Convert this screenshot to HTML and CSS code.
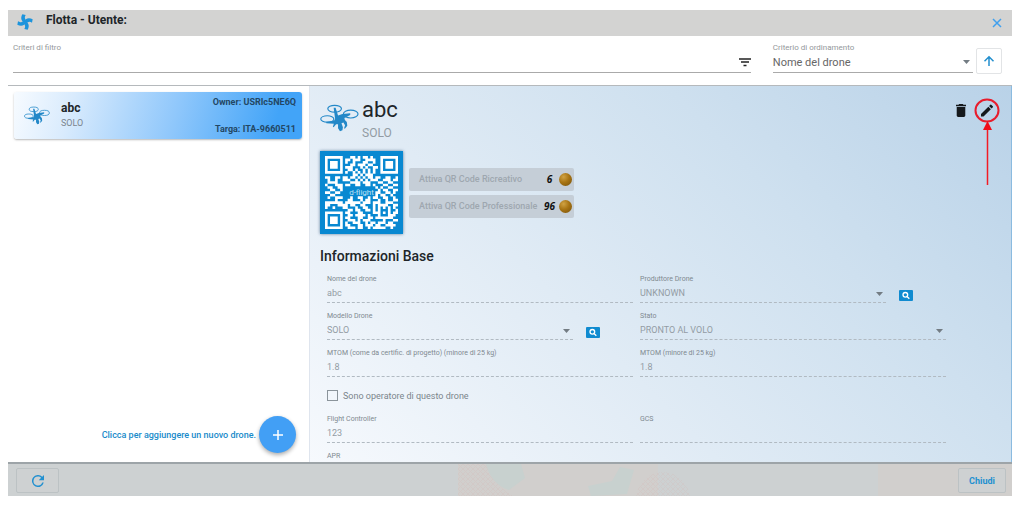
FILE: index.html
```
<!DOCTYPE html>
<html lang="it">
<head>
<meta charset="utf-8">
<title>Flotta - Utente</title>
<link rel="stylesheet" href="styles.css">
</head>
<body>
<svg class="defs" aria-hidden="true">
  <symbol id="drone" viewBox="0 0 40 28">
    <g fill="none" stroke="currentColor" stroke-width="1.2">
      <ellipse cx="15" cy="4.500" rx="7" ry="3.500"/>
      <ellipse cx="31.500" cy="10" rx="7.500" ry="4"/>
      <ellipse cx="7.500" cy="15" rx="6.700" ry="3.300"/>
    </g>
    <path fill="currentColor" d="M14 3.500h2l2.500 8 4.500-1.500 8-1v2l-6 3 .5 2 2 2 .5 4-2.500 3-.8-.5 1-3-1.700-3-2 1 1.500 4-.5 3-2.500 1-2-3v-4l-2 0-2.500 3-.8-.5 1-3-7.700-.5v-1.500l8-1.500 1-1.500z"/>
  </symbol>
  <symbol id="search" viewBox="0 0 24 24">
    <path fill="none" stroke="currentColor" stroke-width="4" d="M15 15l7 7"/>
    <circle cx="10" cy="10" r="7" fill="none" stroke="currentColor" stroke-width="4"/>
  </symbol>
</svg>
<div class="dialog">
  <header class="titlebar">
    <svg class="fan" viewBox="0 0 24 24" aria-hidden="true"><g fill="currentColor"><path id="blade" d="M12 13.500C7 12 4.500 6.500 8 .5L13 1.500C11 4.500 11.500 7 14 10z"/><use href="#blade" transform="rotate(90 12 12)"/><use href="#blade" transform="rotate(180 12 12)"/><use href="#blade" transform="rotate(270 12 12)"/></g></svg>
    <h1>Flotta - Utente:</h1>
    <button class="plain close" aria-label="Chiudi finestra"><svg viewBox="0 0 12 12"><path d="M2 2l8 8M10 2l-8 8"/></svg></button>
  </header>
  <section class="filters">
    <div class="filter-box">
      <label for="filtro">Criteri di filtro</label>
      <div class="filter-line"><input id="filtro" type="text"><svg class="filter-icon" viewBox="0 0 12 10" aria-hidden="true"><path d="M0 2h12M2 5h8M4.500 8.500h3"/></svg></div>
    </div>
    <div class="sort-box">
      <label for="ordine">Criterio di ordinamento</label>
      <select id="ordine"><option>Nome del drone</option></select>
    </div>
    <button class="sort-dir" aria-label="Ordine crescente"><svg viewBox="0 0 12 12"><path d="M6 11V2M1.500 6.200l4.500-4.500 4.500 4.500"/></svg></button>
  </section>
  <main>
    <aside>
      <article class="card">
        <svg class="drone small" aria-hidden="true"><use href="#drone"/></svg>
        <div class="card-name"><h2>abc</h2><p>SOLO</p></div>
        <div class="card-meta"><span>Owner: USRIc5NE6Q</span><span>Targa: ITA-9660511</span></div>
      </article>
      <div class="add-row">
        <span id="add-text">Clicca per aggiungere un nuovo drone.</span>
        <button class="add" aria-labelledby="add-text"><svg viewBox="0 0 10 10"><path d="M5 0v10M0 5h10"/></svg></button>
      </div>
    </aside>
    <section class="detail">
      <div class="detail-head">
        <svg class="drone" aria-hidden="true"><use href="#drone"/></svg>
        <div class="detail-name"><h2>abc</h2><p>SOLO</p></div>
        <div class="actions">
          <button class="plain" aria-label="Elimina"><svg viewBox="5 3 14 18"><path fill="currentColor" d="M6 19c0 1.100.9 2 2 2h8c1.100 0 2-.9 2-2V7H6v12zM19 4h-3.500l-1-1h-5l-1 1H5v2h14V4z"/></svg></button>
          <button class="plain edit" aria-label="Modifica"><svg viewBox="3 3 18 18"><path fill="currentColor" d="M3 17.250V21h3.750L17.810 9.940l-3.750-3.750L3 17.250zM20.710 7.040a1 1 0 0 0 0-1.410l-2.340-2.340a1 1 0 0 0-1.410 0l-1.830 1.830 3.750 3.750 1.830-1.830z"/></svg>
            <svg class="callout" viewBox="0 0 26 88" aria-hidden="true"><ellipse cx="13" cy="12.500" rx="11.500" ry="11" fill="none" stroke="#e81c2c" stroke-width="2"/><path d="M13.500 87V30" stroke="#f31b24" stroke-width="1.500"/><path d="M13.500 23l4.500 9H9z" fill="#f00c18"/></svg>
          </button>
        </div>
      </div>
      <div class="qr-row">
        <div class="qr"><svg viewBox="0 0 29 29" role="img" aria-label="QR Code"><path id="modules" fill="#fff"/></svg><span>d-flight</span></div>
        <div class="qr-buttons">
          <button disabled><span>Attiva QR Code Ricreativo</span><b>6</b><i class="coin"></i></button>
          <button disabled><span>Attiva QR Code Professionale</span><b>96</b><i class="coin"></i></button>
        </div>
      </div>
      <h3>Informazioni Base</h3>
      <form class="fields">
        <div class="field"><label for="nome">Nome del drone</label><input id="nome" value="abc" disabled></div>
        <div class="lookup"><div class="field"><label for="prod">Produttore Drone</label><select id="prod" disabled><option>UNKNOWN</option></select></div><button type="button" class="find" aria-label="Cerca produttore"><svg><use href="#search"/></svg></button></div>
        <div class="lookup"><div class="field"><label for="modello">Modello Drone</label><select id="modello" disabled><option>SOLO</option></select></div><button type="button" class="find" aria-label="Cerca modello"><svg><use href="#search"/></svg></button></div>
        <div class="field"><label for="stato">Stato</label><select id="stato" disabled><option>PRONTO AL VOLO</option></select></div>
        <div class="field"><label for="mtom1">MTOM (come da certific. di progetto) (minore di 25 kg)</label><input id="mtom1" value="1.8" disabled></div>
        <div class="field"><label for="mtom2">MTOM (minore di 25 kg)</label><input id="mtom2" value="1.8" disabled></div>
        <label class="check"><input type="checkbox" disabled>Sono operatore di questo drone</label>
        <div class="field"><label for="fc">Flight Controller</label><input id="fc" value="123" disabled></div>
        <div class="field"><label for="gcs">GCS</label><input id="gcs" disabled></div>
        <div class="field"><label for="apr">APR</label><input id="apr" disabled></div>
      </form>
    </section>
  </main>
  <footer>
    <svg class="map" viewBox="0 0 1004 32" preserveAspectRatio="none" aria-hidden="true">
      <defs><pattern id="hatch" width="5" height="5" patternUnits="userSpaceOnUse"><path d="M0 0l5 5M5 0L0 5" stroke="#d3bcb9" stroke-width="1"/></pattern></defs>
      <path d="M450 0h200v32H450zM870 0h134v32H870z" fill="#d1cfcd"/>
      <path d="M450 0h30c4 14 10 24 26 32h-56z" fill="url(#hatch)" opacity=".3"/>
      <path d="M478 0h35l4 14-16 12c-12-3-20-14-23-26zM580 22l24-5 8-14 14 3-7 24-36 2z" fill="#c8d1cf"/>
      <circle cx="655" cy="35" r="27" fill="url(#hatch)" opacity=".3"/>
    </svg>
    <button class="refresh" aria-label="Aggiorna"><svg viewBox="4 4 16 16"><path fill="currentColor" d="M17.650 6.350A8 8 0 1 0 19.730 14h-2.080A6 6 0 1 1 12 6c1.660 0 3.140.69 4.220 1.780L13 11h7V4l-2.350 2.350z"/></svg></button>
    <button class="chiudi">Chiudi</button>
  </footer>
</div>
<script src="qr.js"></script>
</body>
</html>
```
FILE: qr.js
```
const rows = [
  "#######...##.#.##.#...#######",
  "#.....#.##.###..####..#.....#",
  "#.###.#.#..#...##..#..#.###.#",
  "#.###.#...##.###.##...#.###.#",
  "#.###.#.###...#.#..##.#.###.#",
  "#.....#..##.#..#.#.#..#.....#",
  "#######.#..#.#.#.#.#..#######",
  "...........##.#.###..........",
  "##..##.##.##.#.#.##.##..##..#",
  ".#..#..###..#.#.#.###..###.##",
  ".####.....####.###...##..##..",
  "#...###.##..##..##.#...##..##",
  ".##..##.............#.#..##..",
  "..##..#..............#.##..##",
  "##..##..............##..##.#.",
  "..##................#.##..#..",
  ".#..###...#..##..#.##..##..#.",
  "....#....##...#.##...#..#..##",
  "#######.######.###.###..###..",
  "##...####.##..##...#.####..##",
  "#..#...##...#..##..#.#.#.#.#.",
  ".........##.##..##.#.#...#..#",
  "#######.##...##....###.#.#.##",
  "#.....#..##.####.#...#...###.",
  "#.###.#.##...##..##.#######..",
  "#.###.#..###.#.###.....#...##",
  "#.###.#.#..###..#.##.###.##..",
  "#.....#.##...##.###.##..####.",
  "#######..###.##..#.#####..#.."
];
const d = rows.flatMap((row, y) =>
  [...row].map((c, x) => c === "#" ? `M${x} ${y}h1.05v1.05h-1.05z` : "")
).join("");
document.getElementById("modules").setAttribute("d", d);
```
FILE: styles.css
```
* { box-sizing: border-box; margin: 0; }
body { height: 100vh; padding: 10px 12px 10px 8px; background: #fff; font-family: Roboto, sans-serif; color: #202529; }
button, input, select { font-family: inherit; }
button svg { display: block; fill: none; stroke: none; }
.defs { position: absolute; width: 0; height: 0; }
.dialog { height: 100%; min-height: 300px; display: flex; flex-direction: column; }
.plain { border: 0; background: none; padding: 0; color: inherit; }

.titlebar { display: flex; align-items: center; height: 26px; flex: none; padding: 0 9px; background: #d3d3d2; }
.fan { width: 16px; height: 16px; margin-top: -3px; color: #1d94dc; }
.titlebar h1 { flex: 1; margin-left: 13px; padding-bottom: 7px; font-size: 12px; line-height: 14px; font-weight: 700; }
.close svg { width: 12px; height: 12px; stroke: #40a0ee; stroke-width: 1.5; }

.filters { display: flex; height: 50px; flex: none; padding: 7px 10px 0 5px; border-bottom: 1px solid #b5b9bc; }
.filters label { display: block; font-size: 8px; line-height: 9px; color: #94989b; }
.filter-box { flex: 737; }
.filter-line { display: flex; align-items: center; height: 21px; border-bottom: 1px solid #aaa; }
.filter-line input { flex: 1; min-width: 0; border: 0; background: none; outline: 0; }
.filter-icon { width: 12px; height: 10px; fill: none; stroke: #222; stroke-width: 1.5; }
.sort-box { flex: 200; margin-left: 22px; }
select { appearance: none; border: 0; border-radius: 0; }
.sort-box select, .field select {
  width: 100%; padding: 0; opacity: 1;
  background: no-repeat right 3px center / 7px 4px url("data:image/svg+xml,%3Csvg xmlns='http://www.w3.org/2000/svg' viewBox='0 0 7 4'%3E%3Cpath d='M0 0h7L3.500 4z' fill='%23737c83'/%3E%3C/svg%3E");
}
.sort-box select { display: block; height: 21px; border-bottom: 1px solid #aaa; font-size: 11px; color: #666; }
.sort-dir { width: 26px; height: 26px; margin: 5px 0 0 3px; padding: 6px; border: 1px solid #e2e4e6; border-radius: 2px; background: #fff; }
.sort-dir svg { width: 12px; height: 12px; stroke: #238fce; stroke-width: 1.5; }

main { display: grid; grid-template: minmax(0, 1fr) / minmax(0, 302fr) minmax(0, 702fr); flex: 1; min-height: 0; }
aside { display: flex; flex-direction: column; justify-content: space-between; padding: 6px 7px 9px 6px; border-right: 1px solid #dfe5ee; }
.card { display: flex; align-items: center; height: 47px; padding: 0 6px 0 10px; border-radius: 3px; background: linear-gradient(105deg, #f7fbff 0%, #d9ebfd 20%, #8fc7fb 56%, #42a4f8 90%); box-shadow: 0 1px 2px #8889; }
.drone { width: 39px; height: 28px; color: #2388c8; }
.drone.small { width: 26px; height: 19px; }
.card-name { flex: 1; margin-left: 11px; }
.card h2 { font-size: 12px; line-height: 16px; font-weight: 700; }
.card p { font-size: 9px; line-height: 15px; color: #7b858f; }
.card-meta { display: flex; flex-direction: column; gap: 16px; align-items: flex-end; font-size: 9px; line-height: 11px; font-weight: 700; color: #234764; }
.add-row { display: flex; align-items: center; justify-content: flex-end; gap: 3px; padding-right: 6px; font-size: 9px; font-weight: 500; color: #188aca; }
.add-row span { white-space: nowrap; }
.add { display: grid; place-items: center; width: 37px; height: 37px; padding: 0; border: 0; border-radius: 50%; background: #429ff5; box-shadow: 0 2px 4px #0005; }
.add svg { width: 10px; height: 10px; stroke: #fff; stroke-width: 1.5; }

.detail { overflow: hidden; padding: 11px 0 0 10px; border-right: 1px solid #8bbbe0; background: linear-gradient(45deg, #f6f9fd 0%, #e0ebf5 38%, #cee0ef 68%, #b9d2e8 100%); }
.detail-head { display: flex; align-items: flex-start; height: 54px; padding-right: 18px; }
.detail-head .drone { margin-top: 7px; }
.detail-name { flex: 1; margin-left: 3px; }
.detail-name h2 { font-size: 22px; line-height: 26px; font-weight: 400; }
.detail-name p { font-size: 12px; line-height: 20px; color: #929ba3; }
.actions { display: flex; gap: 15px; margin-top: 7px; color: #15191c; }
.actions svg { width: 10px; height: 13px; }
.actions .edit { position: relative; }
.actions .edit svg { width: 12px; height: 13px; }
.actions .edit .callout { position: absolute; left: -7px; top: -6px; width: 26px; height: 88px; }
.qr-row { display: flex; align-items: center; gap: 6px; }
.qr { position: relative; width: 83px; height: 83px; padding: 5px; background: #0888d1; box-shadow: 0 0 3px #5e7f9c; }
.qr svg { display: block; width: 73px; height: 73px; }
.qr span { position: absolute; left: 0; right: 0; top: 36px; text-align: center; font-size: 8px; line-height: 11px; color: #bfe1f3; }
.qr-buttons { display: flex; flex-direction: column; gap: 4px; }
.qr-buttons button { display: flex; align-items: center; height: 23px; padding: 0 2px 0 10px; border: 0; border-radius: 2px; background: #c5ced7; font-size: 9px; font-weight: 500; color: #9ea7af; }
.qr-buttons span { width: 121px; text-align: left; white-space: nowrap; }
.qr-buttons b { width: 19px; text-align: center; font: italic 700 10px "Open Sans", sans-serif; color: #111; }
.coin { flex: none; width: 13px; height: 13px; border-radius: 50%; background: radial-gradient(circle at 35% 30%, #d0a243, #a87413 45%, #75510c); }
.detail h3 { margin-top: 13px; font-size: 14px; line-height: 18px; font-weight: 500; }

.fields { display: grid; grid-template-columns: 1fr 1fr; column-gap: 7px; row-gap: 8px; padding: 9px 65px 0 7px; }
.field { min-width: 0; flex: 1; }
.field label { display: block; font-size: 7px; line-height: 11px; color: #7f8990; }
.field input, .field select { display: block; width: 100%; height: 18px; padding: 0 0 2px; border: 0; border-bottom: 1px dashed #b1bac2; font-size: 9px; line-height: 14px; color: #939ca4; }
.field input { background: none; }
.lookup { display: flex; align-items: flex-end; gap: 13px; padding-right: 33px; }
.find { width: 14px; height: 11px; margin-bottom: 2px; padding: 1px 3px; border: 0; border-radius: 1px; background: #108bd0; color: #fff; }
.find svg { width: 8px; height: 9px; }
.check { grid-column: 1 / -1; justify-self: start; display: flex; align-items: center; gap: 5px; height: 21px; font-size: 9px; color: #7b858c; }
.check input { appearance: none; width: 11px; height: 11px; border: 1px solid #8b949b; }

footer { position: relative; display: flex; justify-content: space-between; align-items: center; height: 34px; flex: none; padding: 1px 6px 0 8px; border-top: 2px solid #9da4a8; background: #cdd1d2; }
.map { position: absolute; inset: 0; width: 100%; height: 100%; }
footer button { position: relative; display: grid; place-items: center; height: 25px; border: 1px solid #bcc2c4; border-radius: 2px; background: #ced1d2; color: #2290d0; font-size: 9px; font-weight: 700; }
.refresh { width: 43px; }
.refresh svg { width: 12px; height: 12px; }
.chiudi { width: 48px; padding: 0; }
```
